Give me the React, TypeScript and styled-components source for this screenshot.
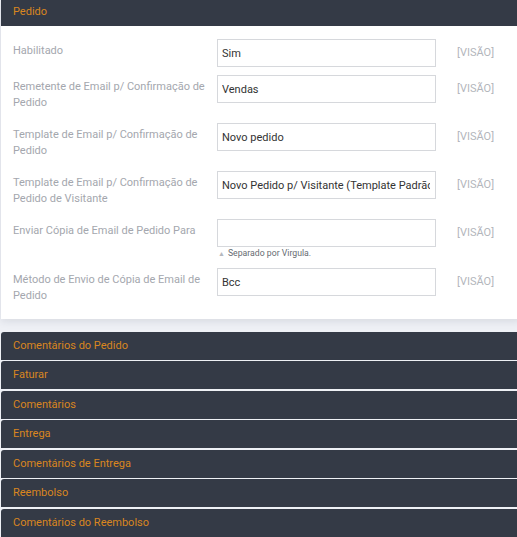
import React from "react";
import styled, { createGlobalStyle } from "styled-components";

const GlobalStyle = createGlobalStyle`
  html, body { margin: 0; padding: 0; background: #eef0f5; }
  body { font-family: Roboto, "Liberation Sans", Arial, sans-serif; overflow: hidden; }
  * { box-sizing: border-box; }
`;

const Page = styled.div`
  width: 517px;
  height: 537px;
  overflow: hidden;
  padding-left: 1px;
  background: #eef0f5;
`;

const Panel = styled.section<{ $open?: boolean }>`
  width: 520px;
  margin-bottom: ${(p) => (p.$open ? "13px" : "1.7px")};
  background: ${(p) => (p.$open ? "#fff" : "transparent")};
  box-shadow: ${(p) => (p.$open ? "0 2px 8px rgba(40,50,70,0.12)" : "none")};
`;

const Header = styled.div<{ $open?: boolean }>`
  height: ${(p) => (p.$open ? "26px" : "27.8px")};
  line-height: ${(p) => (p.$open ? "23px" : "27.8px")};
  padding-left: 12px;
  background: #343a46;
  color: #d9861f;
  font-size: 11px;
  border-radius: ${(p) => (p.$open ? "0" : "3px 0 0 0")};
`;

const Body = styled.div`
  width: 515px;
  padding: 13px 12px 11px 12px;
  display: flex;
  flex-direction: column;
  gap: 8px;
`;

const Row = styled.div`
  display: grid;
  grid-template-columns: 192px 219px auto;
  column-gap: 12px;
  align-items: start;
`;

const Label = styled.div`
  font-size: 11px;
  line-height: 15.5px;
  color: #a4a7ae;
  padding: 4px 0 5px 0;
`;

const Field = styled.div`
  display: flex;
  flex-direction: column;
`;

const Input = styled.input`
  width: 219px;
  height: 28px;
  border: 1px solid #d6d8dc;
  border-radius: 0;
  padding: 0 5px 0 4px;
  font-family: Roboto, "Liberation Sans", Arial, sans-serif;
  font-size: 11px;
  color: #333;
  background: #fff;
  outline: none;
`;

const Help = styled.div`
  display: flex;
  align-items: center;
  gap: 3px;
  padding-left: 1px;
  height: 13px;
  line-height: 13px;
  font-size: 8.7px;
  color: #666b72;
`;

const Arrow = styled.span`
  font-size: 7px;
  color: #b5b8be;
  line-height: 1;
  margin-top: 2px;
`;

const View = styled.div`
  margin-left: 9px;
  line-height: 28px;
  font-size: 11px;
  color: #b3b6bc;
`;

const fields: { label: string; value: string; help?: string }[] = [
  { label: "Habilitado", value: "Sim" },
  { label: "Remetente de Email p/ Confirmação de Pedido", value: "Vendas" },
  { label: "Template de Email p/ Confirmação de Pedido", value: "Novo pedido" },
  {
    label: "Template de Email p/ Confirmação de Pedido de Visitante",
    value: "Novo Pedido p/ Visitante (Template Padrão)",
  },
  { label: "Enviar Cópia de Email de Pedido Para", value: "", help: "Separado por Virgula." },
  { label: "Método de Envio de Cópia de Email de Pedido", value: "Bcc" },
];

const sections = [
  "Comentários do Pedido",
  "Faturar",
  "Comentários",
  "Entrega",
  "Comentários de Entrega",
  "Reembolso",
  "Comentários do Reembolso",
];

export default function App() {
  return (
    <Page>
      <GlobalStyle />
      <Panel $open>
        <Header $open>Pedido</Header>
        <Body>
          {fields.map((f) => (
            <Row key={f.label}>
              <Label>{f.label}</Label>
              <Field>
                <Input defaultValue={f.value} readOnly />
                {f.help && (
                  <Help>
                    <Arrow>▲</Arrow>
                    {f.help}
                  </Help>
                )}
              </Field>
              <View>[VISÃO]</View>
            </Row>
          ))}
        </Body>
      </Panel>
      {sections.map((s) => (
        <Panel key={s}>
          <Header>{s}</Header>
        </Panel>
      ))}
    </Page>
  );
}
